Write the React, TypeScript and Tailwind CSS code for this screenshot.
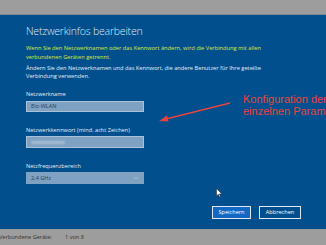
import React from 'react';

export default function App() {
    const font = { fontFamily: '"Open Sans", "Noto Sans", sans-serif' };
    return (
        <div className="relative w-[326px] h-[245px] overflow-hidden flex flex-col bg-[#9d9d9d]" style={font}>
            <div className="h-[15px] bg-[#9d9d9d] border-b border-[#7d8790]" />
            <div className="flex-1 bg-[#024f8e] pl-[26px] pr-[24px] pt-[8px] flex flex-col">
                <h1 className="text-[10.5px] font-light tracking-[-0.2px] text-[#dfe8f2] leading-[16px]">Netzwerkinfos bearbeiten</h1>
                <p className="mt-[4.5px] text-[5.7px] leading-[9px] text-[#d7ea3c]">
                    Wenn Sie den Netzwerknamen oder das Kennwort ändern, wird die Verbindung mit allen<br />verbundenen Geräten getrennt.
                </p>
                <p className="mt-[2.5px] text-[5.7px] leading-[8px] text-[#e6eef6]">
                    Ändern Sie den Netzwerknamen und das Kennwort, die andere Benutzer für Ihre geteilte<br />Verbindung verwenden.
                </p>
                <label className="mt-[10px] text-[5.6px] leading-[8px] text-[#e6eef6]">Netzwerkname</label>
                <div className="mt-[3px] w-[118px] h-[11px] bg-[#7fa2c2] border border-[#a9c2d9] flex items-center px-[4px] text-[5.6px] text-[#1f3f63]">
                    Elo-WLAN
                </div>
                <label className="mt-[14px] text-[5.6px] leading-[8px] text-[#e6eef6]">Netzwerkkennwort (mind. acht Zeichen)</label>
                <div className="mt-[2px] w-[118px] h-[12px] bg-[#7fa2c2] border border-[#a9c2d9] flex items-center px-[4px]">
                    <span className="w-[34px] h-[3px] rounded-full bg-[#a7bfd6] blur-[1px]" />
                </div>
                <label className="mt-[14px] text-[5.6px] leading-[8px] text-[#e6eef6]">Netzfrequenzbereich</label>
                <div className="mt-[2px] w-[118px] h-[12px] bg-[#7fa2c2] border border-[#7fa2c2] flex items-center justify-between px-[4px] text-[5.6px] text-[#1f3f63]">
                    <span>2,4 GHz</span>
                    <svg width="6" height="4" viewBox="0 0 6 4"><path d="M0.5 0.8 L3 3.2 L5.5 0.8" fill="none" stroke="#a9c2d9" strokeWidth="0.8" /></svg>
                </div>
                <div className="mt-[22px] flex justify-end gap-[8px] pr-[1px]">
                    <button className="w-[39px] h-[13px] bg-[#1368c4] border border-[#dfe8f2] text-[5.6px] text-white">Speichern</button>
                    <button className="w-[42px] h-[13px] bg-[#024f8e] border border-[#dfe8f2] text-[5.6px] text-white">Abbrechen</button>
                </div>
            </div>
            <div className="h-[16px] bg-[#9d9d9d] flex items-center text-[5.6px] text-[#333]">
                <span className="w-[66px] -ml-[1px]">Verbundene Geräte:</span>
                <span>1 von 8</span>
            </div>
            <div className="absolute left-[243px] top-[93px] text-[11px] leading-[12px] text-[#e8433c] whitespace-nowrap" style={{ fontFamily: '"Liberation Sans", Arial, sans-serif' }}>
                Konfiguration der<br />einzelnen Parameter
            </div>
            <svg className="absolute left-0 top-0" width="326" height="245">
                <line x1="230" y1="103" x2="166" y2="119" stroke="#e8433c" strokeWidth="1.6" />
                <path d="M159 121 L167 115.5 L168.5 121.5 Z" fill="#e8433c" />
                <path d="M216.5 188.5 L216.5 196 L218.3 194.3 L219.5 197 L220.5 196.5 L219.4 193.9 L221.8 193.9 Z" fill="white" stroke="#222" strokeWidth="0.5" />
            </svg>
        </div>
    );
}
